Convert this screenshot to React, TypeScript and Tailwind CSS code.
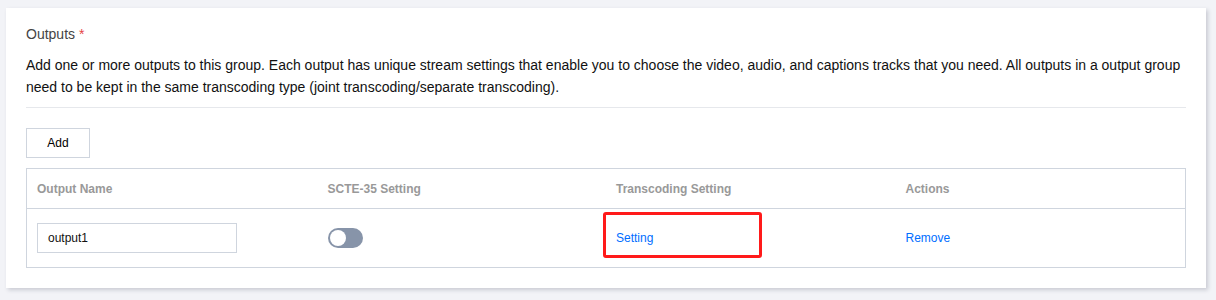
import React from "react";

export default function App() {
  return (
    <div
      className="h-[300px] w-[1216px] bg-[#f2f3f7] pl-[6px] pt-[8px]"
      style={{ fontFamily: '"Liberation Sans", Arial, sans-serif' }}
    >
      <div className="w-[1200px] bg-white px-[20px] pt-[15px] pb-[20px] shadow-[2px_2px_4px_rgba(54,58,80,0.22)]">
        <div className="text-[14px] leading-[22px] text-[#444]">
          Outputs <span className="text-[#e54545]">*</span>
        </div>
        <p className="mt-[9px] text-[14px] leading-[22px] text-[#111]">
          Add one or more outputs to this group. Each output has unique stream settings that enable you to choose the video, audio, and captions tracks that you need. All outputs in a output group need to be kept in the same transcoding type (joint transcoding/separate transcoding).
        </p>
        <div className="mt-[9px] h-px w-[1160px] bg-[#e6e8ec]" />
        <button className="mt-[20px] h-[30px] w-[64px] border border-[#cfd5de] bg-white text-[12px] text-black">
          Add
        </button>
        <div className="mt-[10px] w-[1160px] border border-[#cfd5de]">
          <div className="grid h-[40px] grid-cols-4 items-center border-b border-[#cfd5de] text-[12px] font-bold text-[#999]">
            <div className="pl-[10px]">Output Name</div>
            <div className="pl-[11px]">SCTE-35 Setting</div>
            <div className="pl-[10px]">Transcoding Setting</div>
            <div className="pl-[10px]">Actions</div>
          </div>
          <div className="grid h-[58px] grid-cols-4 items-center text-[12px]">
            <div className="pl-[10px]">
              <div className="flex h-[30px] w-[200px] items-center border border-[#cfd5de] pl-[10px] text-[#111]">
                output1
              </div>
            </div>
            <div className="pl-[11px]">
              <div className="relative h-[20px] w-[35px] rounded-full bg-[#8794a9]">
                <div className="absolute left-[2px] top-[2px] h-[16px] w-[16px] rounded-full bg-white" />
              </div>
            </div>
            <div className="relative pl-[10px]">
              <span className="text-[#006eff]">Setting</span>
              <div className="absolute left-[-3px] top-[-17px] h-[46px] w-[159px] rounded-[3px] border-[3px] border-[#ff1a1a]" />
            </div>
            <div className="pl-[10px]">
              <span className="text-[#006eff]">Remove</span>
            </div>
          </div>
        </div>
      </div>
    </div>
  );
}
